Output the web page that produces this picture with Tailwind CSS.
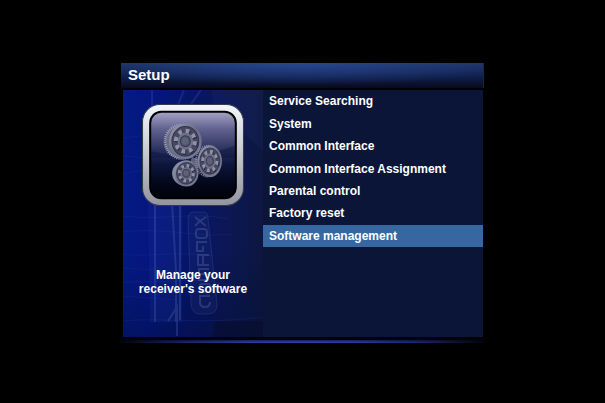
<!DOCTYPE html>
<html lang="en">
<head>
<meta charset="utf-8">
<meta name="viewport" content="width=device-width, initial-scale=1">
<title>Setup</title>
<script src="https://cdn.jsdelivr.net/npm/@tailwindcss/browser@4"></script>
</head>
<body class="bg-black text-white font-['Liberation_Sans',Arial,sans-serif] font-bold text-[12px]">
<main class="min-h-screen flex items-center justify-center pt-[3px]">
  <section class="w-full max-w-[365px]">
    <header class="mx-px h-[25px] flex items-center px-[7px] pb-px border-r border-[#1b2644] bg-[radial-gradient(ellipse_60%_90%_at_50%_0%,#2c4fa0b0,transparent),linear-gradient(to_bottom,#1d3464,#122353_45%,#060a20)]">
      <h1 class="text-[15px] leading-4">Setup</h1>
    </header>
    <div class="mt-[2px] ml-[3px] mr-[2px] grid grid-cols-[140px_1fr] h-[247px]">
      <aside class="relative overflow-hidden flex flex-col items-center bg-[linear-gradient(to_right,#051c8c,#05188a_20%,#07176e_50%,#0d1958_75%,#0e1842)]">
        <svg class="absolute inset-0 size-full" viewBox="0 0 140 247" preserveAspectRatio="none" aria-hidden="true">
          <defs>
            <linearGradient id="shade" x1="0" y1="0" x2="0" y2="1">
              <stop offset="0" stop-color="#000830" stop-opacity=".1"/>
              <stop offset=".65" stop-color="#000830" stop-opacity=".1"/>
              <stop offset="1" stop-color="#000828" stop-opacity=".4"/>
            </linearGradient>
          </defs>
          <rect width="140" height="247" fill="url(#shade)"/>
          <path d="M88 0h52v60L92 20z" fill="#35458c" opacity=".12"/>
          <path d="M29 0v60M47 42l5-20L61 0M57 42l7-22L78 0" fill="none" stroke="#5f78c8" stroke-width="2" opacity=".18"/>
          <path d="M25 112l2 120h32V112z" fill="#2848a8" opacity=".14"/>
          <path d="M32 112v120M49 112l4 70v50M57 112v118M45 231l9-14v29" fill="none" stroke="#7890dd" stroke-width="2" opacity=".2"/>
          <path d="M0 126c40 5 70-5 105 3M0 142c45-5 70 6 110 2M0 164c25 4 50-4 90 2M0 178l50 3M0 192c60 0 80-5 110 4M0 206l55 4M0 231c40-4 80 4 140-4M0 48l25-3M0 66l24 2M0 84l20-4" fill="none" stroke="#2e55d8" opacity=".14"/>
          <path d="M70 122h10q5 0 5 6l9 86q0 10-9 10h-8q-8 0-9-10l-3-84q0-8 5-8z" fill="#33458b" fill-opacity=".14" stroke="#6b7fc0" stroke-opacity=".2"/>
          <g fill="none" stroke="#8292c8" stroke-width="2" opacity=".24">
            <path d="M72 127l5 4 6-4M72 136l5-5 6 5"/>
            <rect x="73" y="139" width="11" height="9" rx="3"/>
            <path d="M84 152H74v9h6v-5"/>
            <path d="M86 165H75v10h11M80 165v10"/>
            <path d="M86 179H76v5h10M76 184v6h10"/>
            <rect x="77" y="194" width="10" height="8" rx="2"/>
            <path d="M87 206H77v6q0 5 5 5t5-5"/>
          </g>
          <path d="M92 231h48v16H90z" fill="#070d2c" opacity=".55"/>
        </svg>
        <svg class="relative mt-[13px] w-[104px] h-[104px] shrink-0" viewBox="0 0 102 102" role="img" aria-label="Gears">
          <defs>
            <linearGradient id="frame" x1="0" y1="0" x2="0" y2="1">
              <stop offset="0" stop-color="#f3f7fc"/><stop offset=".45" stop-color="#c9ccd2"/><stop offset="1" stop-color="#9295a0"/>
            </linearGradient>
            <linearGradient id="glass" x1="0" y1="0" x2="0" y2="1">
              <stop offset="0" stop-color="#a6a4c6"/><stop offset=".2" stop-color="#62628f"/><stop offset=".46" stop-color="#262d5a"/><stop offset=".6" stop-color="#0d173f"/><stop offset=".85" stop-color="#020617"/><stop offset="1" stop-color="#00020a"/>
            </linearGradient>
            <linearGradient id="rim" x1="0" y1="0" x2="1" y2="1">
              <stop offset="0" stop-color="#9c9fb4"/><stop offset=".5" stop-color="#696d84"/><stop offset="1" stop-color="#7c8098"/>
            </linearGradient>
            <g id="gear">
              <circle r="17" fill="url(#rim)"/>
              <circle r="14" fill="#454961" stroke="#30344c" stroke-width="1"/>
              <circle r="9.8" cx="1" cy="1" fill="none" stroke="#2a2d42" stroke-width="4.6" stroke-dasharray="3.8 3.9"/>
              <circle r="9.8" fill="none" stroke="#8f93a8" stroke-width="4.4" stroke-dasharray="3.8 3.9"/>
              <circle r="8" fill="#6d7187"/>
              <circle r="5.2" fill="#4e5268" stroke="#34384e" stroke-width="1"/>
              <circle r="3.6" cx="-.3" cy="-.3" fill="#5e6278"/>
            </g>
          </defs>
          <rect x="1.5" y="1.5" width="99" height="99" rx="17" fill="url(#frame)" stroke="#353b4c"/>
          <rect x="9" y="8.5" width="84" height="85" rx="11" fill="url(#glass)" stroke="#000" stroke-width="2"/>
          <path d="M10 47q38 11 82-5v12H10z" fill="#0a153d" opacity=".45"/>
          <circle cx="40" cy="38" r="16.5" fill="#686c85"/>
          <circle cx="40" cy="38" r="16.5" fill="none" stroke="#a2a6bb" stroke-width="2.5" stroke-dasharray="1 1"/>
          <path d="M50 53q8 4 17-5l-4 20q-8-8-16-5z" fill="#5e6380"/>
          <use href="#gear" transform="translate(43.5 37.5) scale(.94 1.03)"/>
          <ellipse cx="65" cy="57" rx="11" ry="15" fill="none" stroke="#80849b" stroke-width="2" stroke-dasharray="1 1"/>
          <use href="#gear" transform="translate(67.5 57) scale(.7 .92)"/>
          <circle cx="42.5" cy="69" r="12" fill="#85899e"/>
          <use href="#gear" transform="translate(44.5 69) scale(.7 .76)"/>
        </svg>
        <p class="relative mt-[61px] px-2 text-center leading-[14px]">Manage your receiver's software</p>
      </aside>
      <nav aria-label="Setup" class="bg-[#0a1538]">
        <ul class="grid grid-rows-11 h-full">
          <li><a href="#services" class="flex items-center h-full px-1.5">Service Searching</a></li>
          <li><a href="#system" class="flex items-center h-full px-1.5">System</a></li>
          <li><a href="#ci" class="flex items-center h-full px-1.5">Common Interface</a></li>
          <li><a href="#ci-assignment" class="flex items-center h-full px-1.5">Common Interface Assignment</a></li>
          <li><a href="#parental" class="flex items-center h-full px-1.5">Parental control</a></li>
          <li><a href="#reset" class="flex items-center h-full px-1.5">Factory reset</a></li>
          <li><a href="#software" aria-current="page" class="flex items-center h-full px-1.5 bg-[#3767a0]">Software management</a></li>
        </ul>
      </nav>
    </div>
    <div class="pt-[3px] bg-[#020309]">
      <div class="h-[3px] bg-[linear-gradient(to_bottom,#00000080,transparent),linear-gradient(to_right,#02040c,#1c2a74_18%,#2c40a8_35%,#2f44b8_50%,#2c40a8_65%,#1c2a74_82%,#02040c)]"></div>
    </div>
  </section>
</main>
</body>
</html>
